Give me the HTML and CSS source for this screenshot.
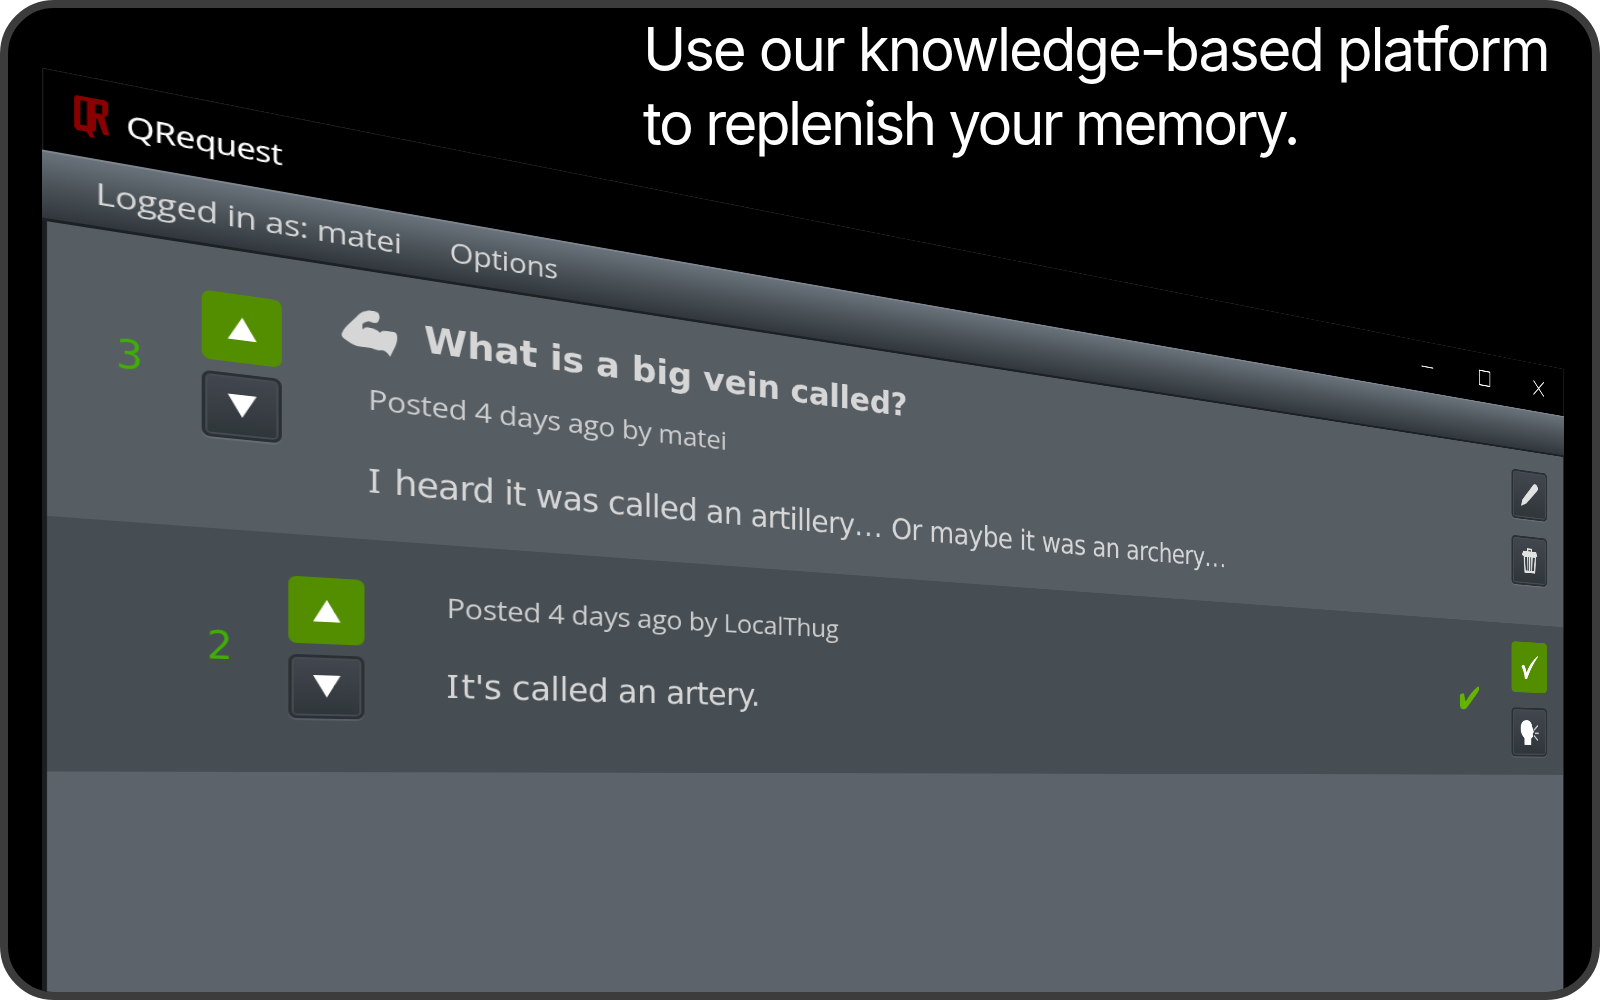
FILE: index.html
```html
<!DOCTYPE html>
<html lang="en">
<head>
<meta charset="utf-8">
<title>QRequest</title>
<link rel="stylesheet" href="styles.css">
</head>
<body>
<main class="frame">
  <h1 class="headline"><span class="line">Use our knowledge-based platform</span><span class="line second">to replenish your memory.</span></h1>
  <section class="window">
    <header class="titlebar">
      <svg class="logo" viewBox="0 0 29 41"><path fill-rule="evenodd" d="M2 0H26L28 2V14L25 17L29 35H24L19 20H18V32L15 34L17 40H13L10 35H2L0 32V2ZM5 4.500V29H10.500V4.500ZM17.500 5.500V14.500H23V5.500Z"/></svg>
      <span class="app-name">QRequest</span>
      <div class="controls">
        <svg viewBox="0 0 26 26"><path d="M0 12H25"/></svg>
        <svg viewBox="0 0 26 26"><path d="M1 1H25V25H1Z"/></svg>
        <svg viewBox="0 0 26 26"><path d="M1 1L25 25M25 1L1 25"/></svg>
      </div>
    </header>
    <nav class="menubar"><span class="user">Logged in as: matei</span><span>Options</span></nav>
    <div class="thread">
      <article class="post question">
        <div class="score">3</div>
        <div class="votes">
          <button class="vote on"><svg viewBox="0 0 26 24"><path d="M13 0L26 24H0Z"/></svg></button>
          <button class="vote"><svg viewBox="0 0 26 24"><path d="M0 0H26L13 24Z"/></svg></button>
        </div>
        <div class="content">
          <h2><svg class="arm" viewBox="0 0 54 48"><path d="M0 30C1 26 3 23 6 19L15 8C17 5 20 2 24 1C28-1 32 0 35 1C37 4 37 7 36 9C35 12 34 13 31 13L26 12C23 13 20 15 20 17V22C22 19 25 18 27 19C30 19 35 20 37 23C38 21 40 20 43 20H51C54 21 54 24 54 26C54 30 53 33 52 36L47 48C44 43 42 42 39 42C35 43 32 42 28 41H15C11 40 7 38 3 35C1 34 0 32 0 30Z"/></svg><span>What is a big vein called?</span></h2>
          <p class="meta">Posted 4 days ago by matei</p>
          <p class="text"><span class="serif-i">I</span> heard it was called an artillery<span class="dots">...</span> Or maybe it was an archery<span class="dots">...</span></p>
        </div>
        <div class="actions">
          <button class="tool"><svg viewBox="0 0 42 42"><path class="soft" d="M1 41L4 30L29 3Q33-1 38 3Q42 7 39 12L13 36Z"/></svg></button>
          <button class="tool"><svg viewBox="0 0 42 42"><path class="soft" fill-rule="evenodd" d="M15 5V0H27V5H36L39 12L36 14L34 42H9L7 14L3 12L6 5ZM18 3V5H24V3ZM10 15L12 38H16L15 15ZM18 15V38H20V15ZM22.500 15V38H24.500V15ZM28 15L27 38H31L33 15Z"/></svg></button>
        </div>
      </article>
      <article class="post answer">
        <div class="score">2</div>
        <div class="votes">
          <button class="vote on"><svg viewBox="0 0 26 24"><path d="M13 0L26 24H0Z"/></svg></button>
          <button class="vote"><svg viewBox="0 0 26 24"><path d="M0 0H26L13 24Z"/></svg></button>
        </div>
        <div class="content">
          <p class="meta">Posted 4 days ago by LocalThug</p>
          <p class="text"><span class="serif-i">I</span>t's called an artery.</p>
        </div>
        <svg class="accepted" viewBox="0 0 43 40"><path d="M0 16Q4 12 10 13Q10 20 13 26Q25 10 39 1Q43-1 43 4L41 9L16 36Q9 42 2 37Q-1 28 0 16Z"/></svg>
        <div class="actions">
          <button class="tool on"><svg viewBox="0 0 42 42"><path d="M2 20Q5 16 9 18Q12 23 14 30Q22 12 40 1V3Q25 19 15 41H10Q8 28 2 20Z"/></svg></button>
          <button class="tool"><svg viewBox="0 0 42 42"><path d="M14 0Q25 0 27 11L31 20L28 23L29 28L25 31V42H9V31Q0 24 0 14Q1 0 14 0Z"/><path class="sound" d="M31 17L40 9M33 22H42M31 26L40 34"/></svg></button>
        </div>
      </article>
    </div>
  </section>
</main>
</body>
</html>
```
FILE: styles.css
```css
* { box-sizing: border-box; }
body { margin: 0; background: #fff; }
button { appearance: none; margin: 0; padding: 0; border: 0; font: inherit; }
h1, h2, p { margin: 0; font-weight: 400; }

.frame {
  position: relative;
  width: 1600px;
  height: 1000px;
  border: 8px solid #3c3c3c;
  border-radius: 54px;
  background: #000;
  overflow: hidden;
}

.headline {
  padding: 4px 0 0 635px;
  font: 400 60px/74px Inter, sans-serif;
  color: #fff;
  white-space: nowrap;
}
.line {
  display: block;
  width: max-content;
  letter-spacing: -2.200px;
  transform: scaleX(.97);
  transform-origin: 0 0;
}
.second { letter-spacing: -2.600px; }

/* The app window is laid out flat and then tilted in perspective. */
.window {
  position: absolute;
  left: -8px;
  top: -8px;
  display: flex;
  flex-direction: column;
  width: 2117px;
  height: 1140px;
  background: #000;
  transform-origin: 0 0;
  transform: matrix3d(1.26211, .27053, 0, .00034719, 0, 1, 0, 0, 0, 0, 1, 0, 42, 67.5, 0, 1);
  color: #d6d6d6;
  font-family: "Open Sans", "Noto Sans", sans-serif;
  white-space: nowrap;
}

.titlebar {
  display: flex;
  height: 81.5px;
  border: solid #1c1c1c;
  border-width: 1px 2px 0 1px;
  color: #fff;
}
.logo { width: 29px; height: 41px; margin: 20px 14px 0 25px; fill: #8a0000; }
.app-name { padding-top: 18.500px; font: 31px/44px "Noto Sans", sans-serif; letter-spacing: -.7px; }
.controls { display: flex; gap: 98px; margin: 28px 46px 0 auto; }
.controls svg { width: 26px; height: 26px; fill: none; stroke: #fff; stroke-width: 1.800; }

.menubar {
  display: flex;
  gap: 48px;
  height: 71px;
  padding: 10.500px 0 0 43.500px;
  font-size: 31.500px;
  line-height: 44px;
  letter-spacing: -.3px;
  border-top: 2px solid #7d868e;
  border-bottom: 3px solid #1d2124;
  background: linear-gradient(#69727a, #4b5359 50%, #30363c);
}

.thread {
  flex: 1;
  border: solid #1b1d1f;
  border-width: 0 2px 0 4px;
  background: #5c636a;
}
.post { display: grid; grid-template-columns: 130px 72px 1fr 83px; padding-right: 39px; }
.question { height: 295.500px; padding-top: 48px; background: #565d63; }
.answer {
  grid-template-columns: 130px 72px 1fr 116px 83px;
  height: 256px;
  padding-top: 45px;
  padding-left: 78px;
  background: #474e53;
}

.score {
  padding: 52px 0 0 56.500px;
  font: 40px/48px "DejaVu Sans Condensed", "DejaVu Sans", sans-serif;
  font-stretch: condensed;
  color: #3fae06;
}
.answer .score { padding-top: 53.500px; }

.votes { display: flex; flex-direction: column; gap: 11.500px; }
.question .votes { margin-top: -1.500px; }
.vote, .tool {
  display: flex;
  align-items: center;
  justify-content: center;
  border: 3px solid #2b3034;
  border-radius: 8px;
  background: linear-gradient(#42474f, #2f3639);
  box-shadow: inset 0 0 0 2px #444b51, 0 2px 1px rgba(255, 255, 255, .1);
}
.vote { width: 72px; height: 69.500px; }
.vote svg { width: 26px; height: 24px; fill: #fff; }
.on { border: 0; background: #538e00; box-shadow: none; }
.vote.on { height: 72px; }

.content { padding-left: 81.500px; }
h2 {
  display: flex;
  gap: 27px;
  margin: -4.500px 0 27px -26px;
  font: 700 40px/48px "DejaVu Sans", Verdana, sans-serif;
  letter-spacing: -.2px;
}
.arm { width: 54px; height: 48px; fill: #d6d6d6; }
.meta { font-size: 31.500px; line-height: 44px; letter-spacing: -.35px; color: #ccc; }
.text {
  margin: 42px 0 0;
  font: 36.500px/50px "DejaVu Sans", Verdana, sans-serif;
  letter-spacing: -.8px;
}
.serif-i { margin-right: 3px; font-family: "Noto Sans", sans-serif; }
.dots { letter-spacing: 1.500px; }
.answer .content { padding-top: 2.500px; }
.answer .text { margin-top: 41px; letter-spacing: -.5px; }

.accepted { width: 43px; height: 40px; margin-top: 63.500px; fill: #63b300; }

.actions { display: flex; flex-direction: column; gap: 29px; margin-top: -15px; }
.answer .actions { gap: 26px; }
.tool { width: 83px; height: 83px; }
.tool.on { height: 86px; }
.tool svg { width: 42px; height: 42px; fill: #fff; overflow: visible; }
.tool .soft { fill: #e2e2e2; }
.tool .sound { fill: none; stroke: #c4c6c8; stroke-width: 2.500; }
```
